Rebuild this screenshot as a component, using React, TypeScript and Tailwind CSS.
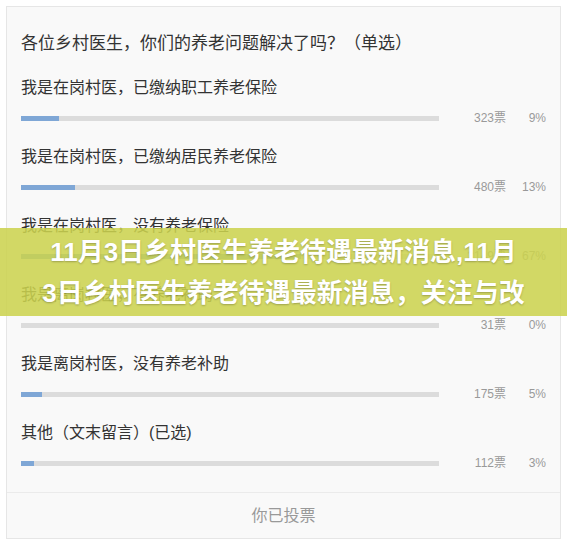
const options = [
  { label: "我是在岗村医，已缴纳职工养老保险", votes: 323, pct: 9 },
  { label: "我是在岗村医，已缴纳居民养老保险", votes: 480, pct: 13 },
  { label: "我是在岗村医，没有养老保险", votes: 2149, pct: 67 },
  { label: "我是离岗村医，有养老补助", votes: 31, pct: 0 },
  { label: "我是离岗村医，没有养老补助", votes: 175, pct: 5 },
  { label: "其他（文末留言）(已选)", votes: 112, pct: 3 },
];

const font = { fontFamily: '"Liberation Sans", "Noto Sans CJK SC", sans-serif' };

const App = () => {
  return (
    <div className="relative w-[567px] h-[547px] bg-white overflow-hidden" style={font}>
      <div className="mx-[6px] mt-[6px] border border-[#e6e6e6] bg-[#f9f9f9]">
        <div className="px-[14px] pt-[25px] pb-[20px]">
          <h2 className="text-[17px] leading-[24px] text-[#333]">
            各位乡村医生，你们的养老问题解决了吗？（单选）
          </h2>
          <ul className="flex flex-col gap-[18px] mt-[20px]">
            {options.map((o) => (
              <li key={o.label}>
                <p className="text-[16px] leading-[24px] text-[#333]">{o.label}</p>
                <div className="flex items-center h-[20px] mt-[7px] translate-y-[1px]">
                  <div className="flex-1 h-[5px] bg-[#dcdcdc]">
                    <div className="h-full bg-[#7fa7d6]" style={{ width: `${o.pct}%` }} />
                  </div>
                  <span className="w-[67px] text-right text-[12px] text-[#999]">{o.votes}票</span>
                  <span className="w-[40px] text-right text-[12px] text-[#999]">{o.pct}%</span>
                </div>
              </li>
            ))}
          </ul>
        </div>
        <div className="border-t border-[#ebebeb] h-[46px] flex items-center justify-center text-[16px] text-[#999]">
          你已投票
        </div>
      </div>

      <div className="absolute left-0 right-0 top-[228px] h-[88px] bg-[rgba(203,210,78,0.87)] flex flex-col items-center justify-center">
        <p className="text-white font-bold text-[26px] leading-[42px] [text-shadow:0_1px_2px_rgba(0,0,0,0.25)] whitespace-nowrap">
          11月3日乡村医生养老待遇最新消息,11月
        </p>
        <p className="text-white font-bold text-[26px] leading-[42px] -mt-[1px] [text-shadow:0_1px_2px_rgba(0,0,0,0.25)] whitespace-nowrap">
          3日乡村医生养老待遇最新消息，关注与改
        </p>
      </div>
    </div>
  );
};

export default App;
